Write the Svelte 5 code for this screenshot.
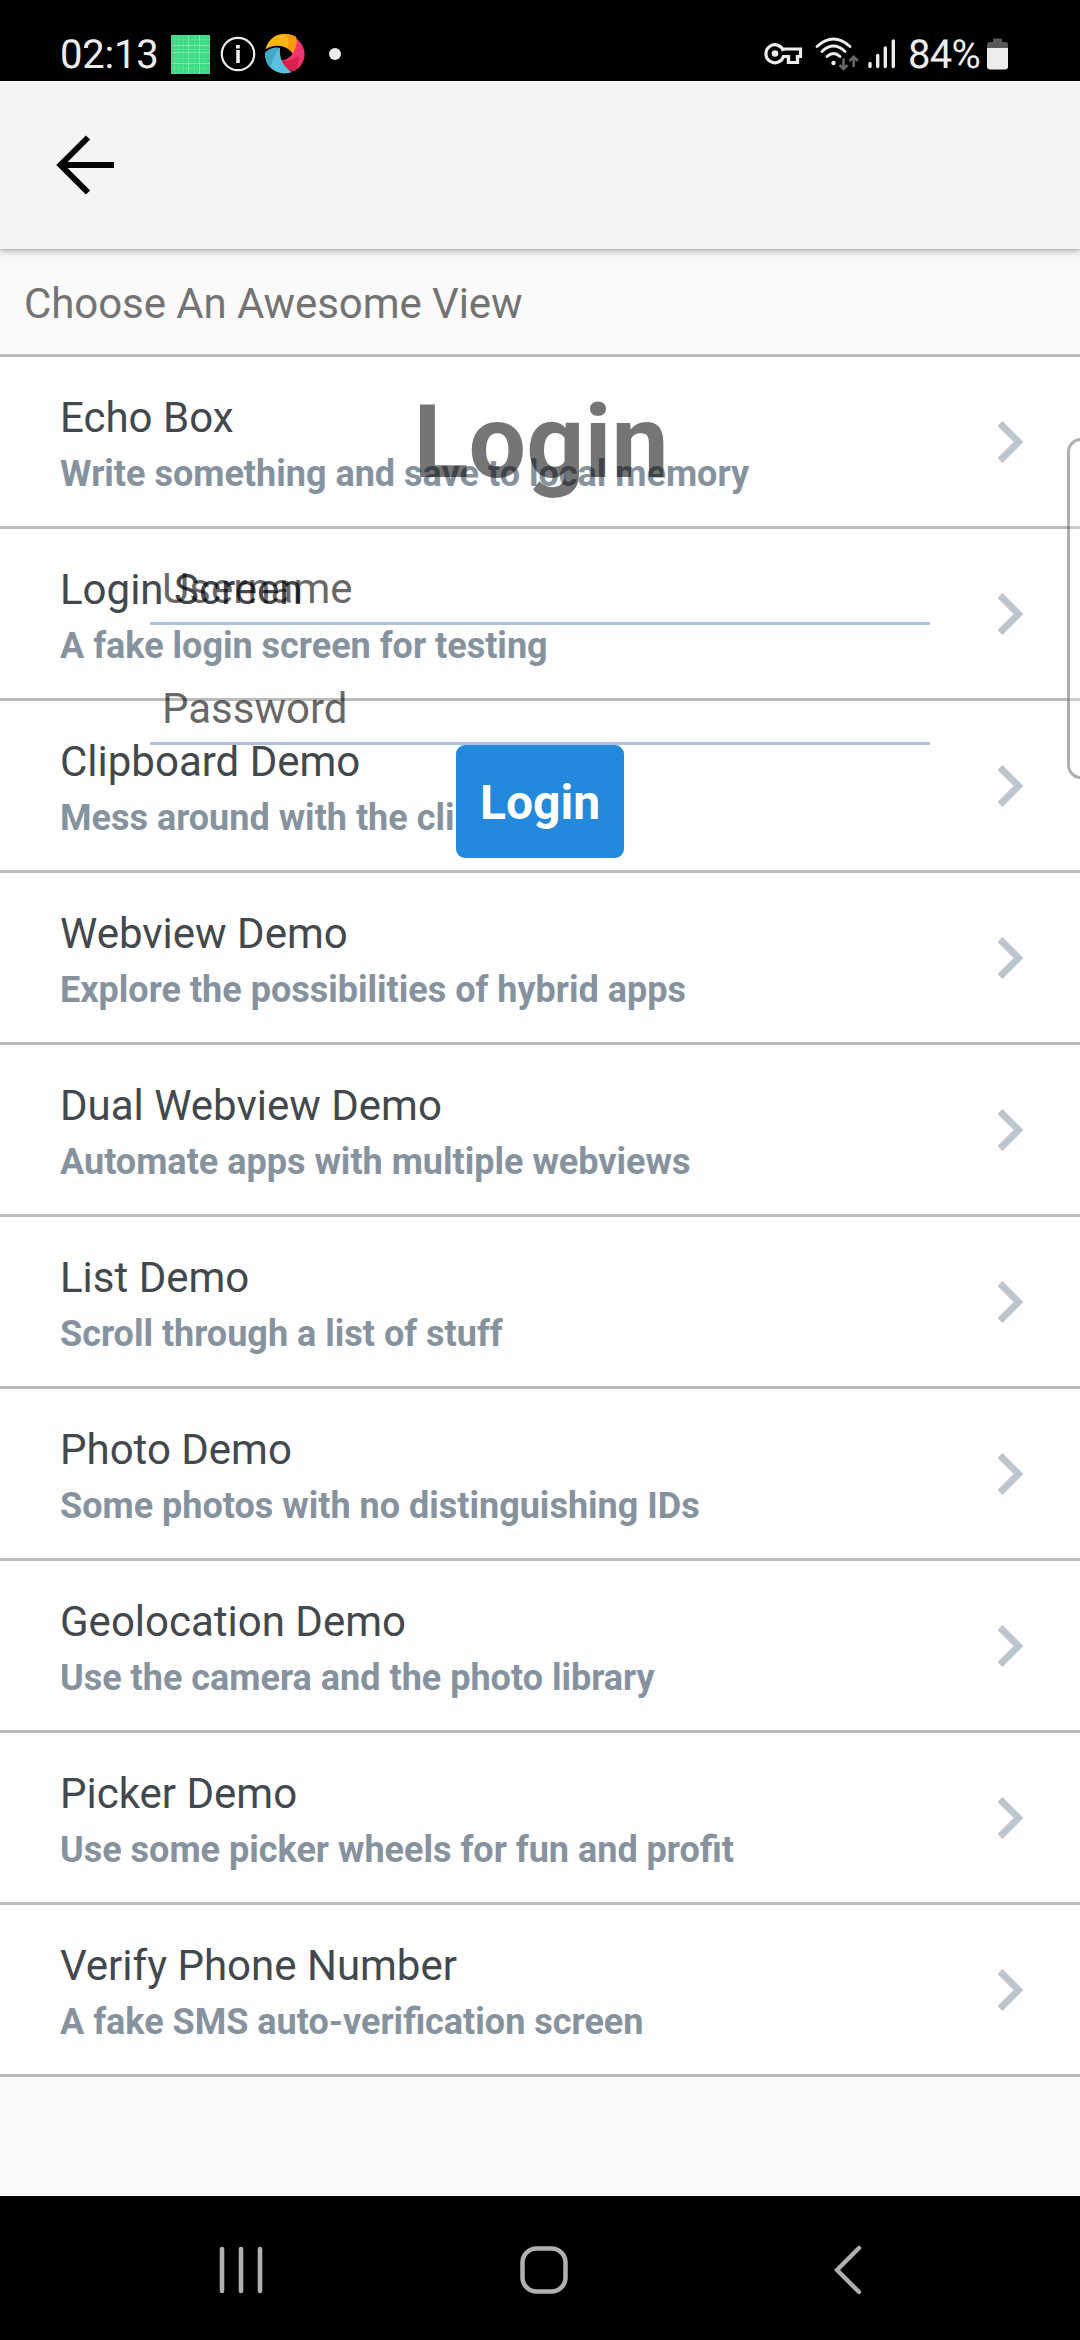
<script>
  const rows = [
    ['Echo Box', 'Write something and save to local memory'],
    ['Login Screen', 'A fake login screen for testing'],
    ['Clipboard Demo', 'Mess around with the clipboard'],
    ['Webview Demo', 'Explore the possibilities of hybrid apps'],
    ['Dual Webview Demo', 'Automate apps with multiple webviews'],
    ['List Demo', 'Scroll through a list of stuff'],
    ['Photo Demo', 'Some photos with no distinguishing IDs'],
    ['Geolocation Demo', 'Use the camera and the photo library'],
    ['Picker Demo', 'Use some picker wheels for fun and profit'],
    ['Verify Phone Number', 'A fake SMS auto-verification screen'],
  ];
</script>

<div class="screen">
  <div class="status">
    <span class="clock">02:13</span>
    <svg class="grid-icon" width="39" height="39" viewBox="0 0 39 39">
      <rect width="39" height="39" fill="#3ddc84" />
      <path d="M3.500 0v39M7.500 0v39M12.500 0v39M23.500 0v39M33.500 0v39M0 4.500h39M0 14.500h39M0 23.500h39M0 33.500h39" stroke="#52e092" stroke-width="1" fill="none" />
      <path d="M17.500 0v39M28.500 0v39M0 10.500h39M0 17.500h39M0 28.500h39" stroke="#7ce8ad" stroke-width="1" fill="none" />
    </svg>
    <svg class="info-icon" width="36" height="36" viewBox="0 0 36 36">
      <circle cx="18" cy="18" r="16.200" fill="none" stroke="#ededed" stroke-width="2.200" />
      <rect x="16" y="9" width="3.800" height="3.500" fill="#ededed" />
      <path d="M18 14v13" fill="none" stroke="#ededed" stroke-width="3.600" />
    </svg>
    <svg class="swirl-icon" width="40" height="40" viewBox="0 0 40 40">
      <path d="M0.500 15C3 6 10 0 19 0c5 0 9 1 12 3 2 7 1 12-3 17-5-8-17-11-27-5z" fill="#fdb515" />
      <path d="M20 0c5 0 8 1 11 3 2 7 1 12-3 17-1-3-3-4-6-6 3-5 2-9-2-14z" fill="#fc9a0b" />
      <path d="M32 5c6 5 9 12 7 20-2 6-6 11-11 12-6-1-10-4-12-11 8 1 16-9 16-21z" fill="#ef336c" />
      <path d="M16 26c6 2 13 0 17-4 1 6 0 10-3 15-7 0-12-4-14-11z" fill="#da1f4e" />
      <path d="M0 19c4-5 10-6 15-5-1 10 3 19 12 24-4 2-12 2-17-1C3 33 0 27 0 19z" fill="#5bc0de" />
      <path d="M0 19c4-5 10-6 15-5-5 6-8 12-9 20-4-3-6-9-6-15z" fill="#45a9c6" />
    </svg>
    <span class="dot"></span>

    <svg class="key-icon" width="38" height="22" viewBox="0 0 38 22">
      <path d="M18.500 8A9 9 0 1 0 18.500 13.500H23.500V19.500H32.500V13.500H35.500V6H18.500" fill="none" stroke="#ededed" stroke-width="3.200" />
      <circle cx="10" cy="10.500" r="3.300" fill="#ededed" />
      <path d="M26 12h3v7h-3z" fill="#000" />
      <path d="M23.500 13.500V19.500H32.500V12" fill="none" stroke="#ededed" stroke-width="3.200" />
    </svg>
    <svg class="wifi-icon" width="44" height="34" viewBox="0 0 44 34">
      <g fill="none" stroke="#ededed" stroke-width="2.900" stroke-linecap="round">
        <path d="M2 9.500Q18.500-5.500 35 9.500" />
        <path d="M7 14.500Q18.500 3.500 30 14.500" />
        <path d="M12 19.500Q18.500 13.500 25 19.500" />
      </g>
      <circle cx="18.500" cy="26" r="2.200" fill="#ededed" />
      <path d="M28.500 21.500V32M24.500 28l4 4 4-4M38.700 30V20M34.500 24l4.200-4.200 4.200 4.200" fill="none" stroke="#666" stroke-width="2.600" />
    </svg>
    <svg class="signal-icon" width="28" height="30" viewBox="0 0 28 30">
      <path d="M2 24.500v3M9.700 16.500v11M17.300 9v18.500M25.300 2v25.500" stroke="#ededed" stroke-width="3.400" stroke-linecap="round" />
    </svg>
    <span class="percent">84%</span>
    <svg class="battery-icon" width="21" height="32" viewBox="0 0 21 32">
      <path d="M6 4V1.500Q6 .5 7 .5h7q1 0 1 1V4h3q3 0 3 3v4H0V7q0-3 3-3z" fill="#595959" />
      <path d="M0 10h21v18.500Q21 31.500 18 31.500H3Q0 31.500 0 28.500z" fill="#ededed" />
    </svg>
  </div>

  <header class="appbar">
    <span class="ghost">The App</span>
    <svg class="back" width="60" height="60" viewBox="0 0 60 60">
      <path d="M32 2.500L4.500 30L32 57.500M5 30H58" fill="none" stroke="#000" stroke-width="6" />
    </svg>
  </header>

  <h2 class="section">Choose An Awesome View</h2>

  <main>
    {#each rows as [title, subtitle]}
      <div class="row">
        <div class="labels">
          <div class="title">{title}</div>
          <div class="subtitle">{subtitle}</div>
        </div>
        <svg class="chevron" width="28" height="42" viewBox="0 0 28 42">
          <path d="M3 2.500L21.600 21L3 39.500" fill="none" stroke="#bdc6cf" stroke-width="6.800" />
        </svg>
      </div>
    {/each}
  </main>

  <nav class="navbar">
    <svg width="48" height="50" viewBox="0 0 48 50">
      <path d="M5 4v42M24 4v42M43 4v42" stroke="#b0b0b0" stroke-width="4.600" stroke-linecap="round" />
    </svg>
    <svg class="home" width="50" height="50" viewBox="0 0 50 50">
      <rect x="3.500" y="3.500" width="43" height="43" rx="14" fill="none" stroke="#b0b0b0" stroke-width="4.500" />
    </svg>
    <svg width="30" height="50" viewBox="0 0 30 50">
      <path d="M26 3L4 25L26 47" fill="none" stroke="#b0b0b0" stroke-width="4.300" stroke-linecap="round" />
    </svg>
  </nav>

  <!-- Login view fading in above the list -->
  <div class="login">
    <h1>Login</h1>
    <div class="field">Username</div>
    <div class="field">Password</div>
    <button>Login</button>
  </div>
  <div class="edge"></div>
</div>

<style>
  :global(body) { margin: 0; background: #fafafa; }
  .screen {
    position: relative;
    width: 1080px;
    height: 2340px;
    overflow: hidden;
    display: flex;
    flex-direction: column;
    background: #fafafa;
    font-family: Roboto, sans-serif;
  }
  svg { display: block; flex: none; overflow: visible; }

  .status {
    height: 81px;
    box-sizing: border-box;
    padding: 27px 72px 0 60px;
    display: flex;
    align-items: center;
    background: #000;
    color: #ededed;
    font-size: 40px;
    line-height: 54px;
    white-space: nowrap;
    text-rendering: geometricPrecision;
  }
  .clock { width: 111px; padding-top: 1px; letter-spacing: -0.2px; }
  .info-icon { margin-left: 10px; }
  .swirl-icon { margin-left: 9px; }
  .dot { width: 12px; height: 12px; border-radius: 50%; background: #ededed; margin-left: 24px; }
  .key-icon { margin-left: auto; }
  .wifi-icon { margin-left: 12px; }
  .signal-icon { margin-left: 9px; }
  .percent { width: 73px; padding-top: 1px; margin-left: 12px; letter-spacing: -0.7px; }
  .battery-icon { margin-left: 6px; }

  .appbar {
    position: relative;
    z-index: 1;
    height: 168px;
    box-sizing: border-box;
    padding-left: 56px;
    display: flex;
    align-items: center;
    background: #f4f4f4;
    box-shadow: 0 3px 6px rgba(0, 0, 0, 0.2), 0 1px 2px rgba(0, 0, 0, 0.14), 0 8px 14px rgba(0, 0, 0, 0.03);
  }
  .ghost { position: absolute; left: 49px; top: 52px; font-size: 60px; line-height: 68px; color: #f3f3f3; }
  .back { position: relative; }

  .section {
    height: 105px;
    margin: 0;
    padding-left: 24px;
    border-bottom: 3px solid #bbb;
    font-size: 42px;
    font-weight: 400;
    line-height: 110px;
    letter-spacing: -0.08px;
    color: #737373;
  }

  .row {
    height: 169px;
    display: flex;
    justify-content: space-between;
    padding: 0 55px 0 60px;
    border-bottom: 3px solid #bbb;
    background: #fefefe;
    white-space: nowrap;
  }
  .labels { padding-top: 36px; }
  .title { font-size: 42px; line-height: 50px; color: #43484d; }
  .subtitle { margin-top: 10px; font-size: 36px; line-height: 42px; font-weight: 700; color: #86939e; }
  .chevron { align-self: center; }

  .navbar {
    margin-top: auto;
    height: 144px;
    display: flex;
    align-items: center;
    justify-content: space-between;
    padding: 4px 217px 0;
    box-sizing: border-box;
    background: #000;
  }
  .home { margin-right: 10px; }

  .login {
    position: absolute;
    top: 357px;
    left: 150px;
    width: 780px;
    display: flex;
    flex-direction: column;
    align-items: center;
  }
  .login h1 {
    margin: 25px 0 43px;
    padding-left: 2px;
    font-size: 102px;
    line-height: 120px;
    font-weight: 700;
    color: rgba(0, 0, 0, 0.54);
  }
  .field {
    width: 100%;
    height: 120px;
    box-sizing: border-box;
    padding: 59px 0 0 12px;
    border-bottom: 3px solid #afbfde;
    font-size: 42px;
    line-height: 50px;
    color: rgba(0, 0, 0, 0.6);
  }
  .field:nth-of-type(1) { height: 80px; padding-top: 19px; }
  .login button {
    width: 168px;
    height: 113px;
    border: 0;
    padding: 3px 0 0;
    border-radius: 9px;
    background: #2289dc;
    color: #fff;
    font: 700 48px/56px Roboto, sans-serif;
  }
  .edge {
    position: absolute;
    left: 1067px;
    top: 438px;
    width: 60px;
    height: 335px;
    border: 3px solid rgba(0, 0, 0, 0.31);
    border-radius: 14px;
    background: rgba(255, 255, 255, 0.25);
  }
</style>
